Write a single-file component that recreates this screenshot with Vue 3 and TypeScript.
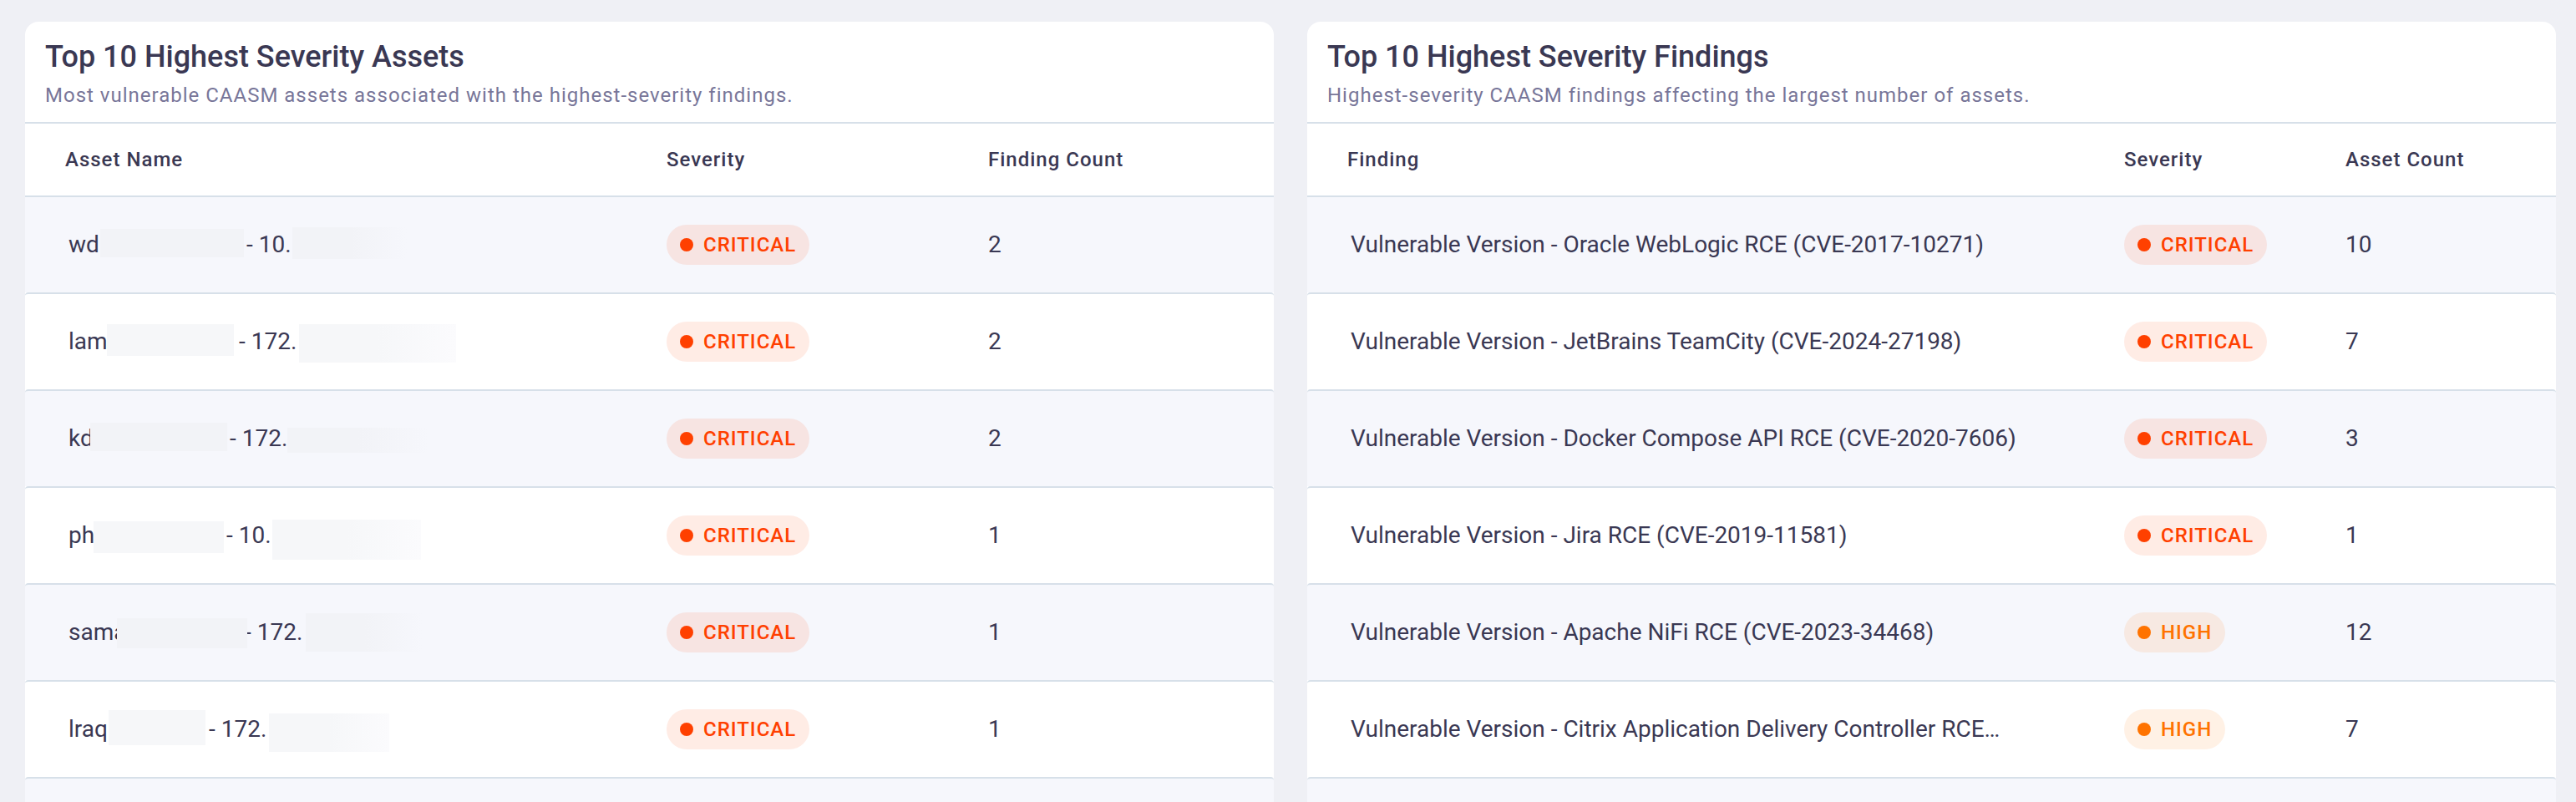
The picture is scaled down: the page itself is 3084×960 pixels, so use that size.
<script setup lang="ts">
type Severity = 'Critical' | 'High'

interface Mask {
  x: number
  y: number
  width: number
  height: number
  fade?: boolean
}

interface Asset {
  host: string
  hostWidth: number
  address: string
  masks: Mask[]
  severity: Severity
  count: number
}

interface Finding {
  name: string
  severity: Severity
  count: number
}

const assets: Asset[] = [
  {
    host: 'wd', hostWidth: 213, address: '- 10.', severity: 'Critical', count: 2,
    masks: [{ x: 38, y: 5, width: 172, height: 34 }, { x: 268, y: 3, width: 138, height: 38, fade: true }],
  },
  {
    host: 'lam', hostWidth: 204, address: '- 172.', severity: 'Critical', count: 2,
    masks: [{ x: 46, y: 3, width: 152, height: 38 }, { x: 276, y: 3, width: 188, height: 46, fade: true }],
  },
  {
    host: 'kd', hostWidth: 193, address: '- 172.', severity: 'Critical', count: 2,
    masks: [{ x: 26, y: 5, width: 164, height: 34 }, { x: 262, y: 11, width: 170, height: 30, fade: true }],
  },
  {
    host: 'ph', hostWidth: 189, address: '- 10.', severity: 'Critical', count: 1,
    masks: [{ x: 30, y: 7, width: 156, height: 38 }, { x: 244, y: 5, width: 178, height: 48, fade: true }],
  },
  {
    host: 'sama', hostWidth: 211, address: '- 172.', severity: 'Critical', count: 1,
    masks: [{ x: 58, y: 7, width: 156, height: 36 }, { x: 284, y: 1, width: 141, height: 46, fade: true }],
  },
  {
    host: 'lraq', hostWidth: 168, address: '- 172.', severity: 'Critical', count: 1,
    masks: [{ x: 48, y: 1, width: 116, height: 42 }, { x: 240, y: 5, width: 144, height: 46, fade: true }],
  },
]

const findings: Finding[] = [
  { name: 'Vulnerable Version - Oracle WebLogic RCE (CVE-2017-10271)', severity: 'Critical', count: 10 },
  { name: 'Vulnerable Version - JetBrains TeamCity (CVE-2024-27198)', severity: 'Critical', count: 7 },
  { name: 'Vulnerable Version - Docker Compose API RCE (CVE-2020-7606)', severity: 'Critical', count: 3 },
  { name: 'Vulnerable Version - Jira RCE (CVE-2019-11581)', severity: 'Critical', count: 1 },
  { name: 'Vulnerable Version - Apache NiFi RCE (CVE-2023-34468)', severity: 'High', count: 12 },
  { name: 'Vulnerable Version - Citrix Application Delivery Controller RCE…', severity: 'High', count: 7 },
]

const maskStyle = (m: Mask) => ({
  left: `${m.x}px`,
  top: `${m.y}px`,
  width: `${m.width}px`,
  height: `${m.height}px`,
})
</script>

<template>
  <main class="page">
    <section class="card" aria-labelledby="assets-title">
      <header class="card-header">
        <h2 id="assets-title" class="title">Top 10 Highest Severity Assets</h2>
        <p class="subtitle">Most vulnerable CAASM assets associated with the highest-severity findings.</p>
      </header>
      <table class="table" aria-labelledby="assets-title">
        <colgroup>
          <col />
          <col class="asset-severity" />
          <col class="asset-count" />
        </colgroup>
        <thead>
          <tr>
            <th scope="col">Asset Name</th>
            <th scope="col">Severity</th>
            <th scope="col">Finding Count</th>
          </tr>
        </thead>
        <tbody>
          <tr v-for="asset in assets" :key="asset.host">
            <td>
              <div class="name">
                <span class="host" :style="{ width: `${asset.hostWidth}px` }">{{ asset.host }}</span>
                <span>{{ asset.address }}</span>
                <span
                  v-for="mask in asset.masks"
                  :key="mask.x"
                  class="mask"
                  :class="{ fade: mask.fade }"
                  :style="maskStyle(mask)"
                ></span>
              </div>
            </td>
            <td>
              <span class="badge" :class="asset.severity.toLowerCase()">
                <span class="dot"></span>{{ asset.severity.toUpperCase() }}
              </span>
            </td>
            <td>{{ asset.count }}</td>
          </tr>
        </tbody>
      </table>
      <div class="next-row"></div>
    </section>

    <section class="card" aria-labelledby="findings-title">
      <header class="card-header">
        <h2 id="findings-title" class="title">Top 10 Highest Severity Findings</h2>
        <p class="subtitle">Highest-severity CAASM findings affecting the largest number of assets.</p>
      </header>
      <table class="table" aria-labelledby="findings-title">
        <colgroup>
          <col />
          <col class="finding-severity" />
          <col class="finding-count" />
        </colgroup>
        <thead>
          <tr>
            <th scope="col">Finding</th>
            <th scope="col">Severity</th>
            <th scope="col">Asset Count</th>
          </tr>
        </thead>
        <tbody>
          <tr v-for="finding in findings" :key="finding.name">
            <td><div class="name">{{ finding.name }}</div></td>
            <td>
              <span class="badge" :class="finding.severity.toLowerCase()">
                <span class="dot"></span>{{ finding.severity.toUpperCase() }}
              </span>
            </td>
            <td>{{ finding.count }}</td>
          </tr>
        </tbody>
      </table>
      <div class="next-row"></div>
    </section>
  </main>
</template>

<style>
body {
  margin: 0;
  background: #eff0f5;
}
</style>

<style scoped>
.page {
  box-sizing: border-box;
  min-height: 100vh;
  padding: 26px 24px 0 30px;
  display: grid;
  grid-template-columns: repeat(2, minmax(0, 1fr));
  gap: 40px;
  color: #3a3853;
  font-family: Roboto, "Liberation Sans", sans-serif;
}

.card {
  display: flex;
  flex-direction: column;
  overflow: hidden;
  background: #fff;
  border-radius: 16px 16px 0 0;
}

.card-header {
  padding: 20px 24px 16px;
  border-bottom: 2px solid #d7e0e9;
}

.title {
  margin: 0;
  font-size: 36px;
  font-weight: 500;
  line-height: 44px;
}

.subtitle {
  margin: 8px 0 0;
  color: #787699;
  font-size: 24px;
  line-height: 32px;
  letter-spacing: 1px;
}

.table {
  width: 100%;
  table-layout: fixed;
  border-collapse: separate;
  border-spacing: 0;
}

.asset-severity {
  width: 385px;
}

.asset-count {
  width: 390px;
}

.finding-severity {
  width: 265px;
}

.finding-count {
  width: 300px;
}

th {
  height: 86px;
  padding: 0 0 0 48px;
  border-bottom: 2px solid #d7e0e9;
  font-size: 24px;
  font-weight: 500;
  line-height: 32px;
  letter-spacing: 1px;
  text-align: left;
}

td {
  height: 114px;
  padding: 0 0 0 48px;
  font-size: 28px;
  line-height: 48px;
  vertical-align: middle;
}

tbody tr:nth-child(odd) td {
  background: #f6f7fc;
}

tbody tr + tr td {
  border-top: 2px solid #d7e0e9;
}

tbody tr + tr td:first-child {
  border-top-left-radius: 4px;
}

tbody tr + tr td:last-child {
  border-top-right-radius: 4px;
}

.next-row {
  flex: 1;
  border-top: 2px solid #d7e0e9;
  border-radius: 4px 4px 0 0;
  background: #f6f7fc;
}

.name {
  position: relative;
  display: flex;
  margin-left: 4px;
  white-space: nowrap;
}

.host {
  flex: none;
}

.mask {
  position: absolute;
  background: #f6f7f9;
}

.mask.fade {
  background: linear-gradient(90deg, #f6f7f9 50%, #fbfbfd);
}

tr:nth-child(odd) .mask {
  background: #f2f3f7;
}

tr:nth-child(odd) .mask.fade {
  background: linear-gradient(90deg, #f2f3f7 50%, #f6f7fc);
}

.badge {
  display: flex;
  align-items: center;
  gap: 12px;
  width: fit-content;
  height: 48px;
  padding: 0 16px;
  border-radius: 24px;
  font-size: 24px;
  font-weight: 500;
  letter-spacing: 1px;
}

.dot {
  width: 16px;
  height: 16px;
  border-radius: 50%;
  background: currentColor;
}

.critical {
  color: #ff4000;
  background: rgba(255, 64, 0, 0.1);
}

.high {
  color: #ff7300;
  background: rgba(255, 115, 0, 0.1);
}
</style>
